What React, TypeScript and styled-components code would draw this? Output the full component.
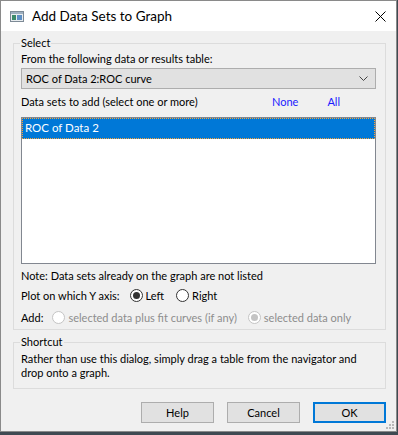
import React from 'react';
import styled, { createGlobalStyle } from 'styled-components';

const Global = createGlobalStyle`
  html, body { margin: 0; padding: 0; }
  body {
    background: #3f4a52;
    font-family: Lato, "Noto Sans", sans-serif;
    font-size: 11px;
    color: #000;
  }
`;

const Window = styled.div`
  position: relative;
  width: 397px;
  height: 432px;
  box-sizing: border-box;
  border: 1px solid #8a8a8a;
  background: #f0f0f0;
  display: flex;
  flex-direction: column;
`;

const TitleBar = styled.div`
  height: 30px;
  flex: none;
  background: #fff;
  display: flex;
  align-items: center;
  padding-left: 9px;
  padding-right: 9px;
`;

const TitleText = styled.div`
  flex: 1;
  margin-left: 8px;
  font-size: 13.5px;
  color: #000;
`;

const Body = styled.div`
  display: flex;
  flex-direction: column;
  padding: 4px 10px 0 12px;
`;

const Group = styled.fieldset<{ $gap?: number; $bottom?: number }>`
  margin: ${p => p.$gap ?? 0}px 0 0 0;
  padding: 0 9px ${p => p.$bottom ?? 2}px 7px;
  border: 1px solid #dcdcdc;
  min-width: 0;
  display: flex;
  flex-direction: column;
`;

const Legend = styled.legend`
  padding: 0 1px;
  margin-left: -1px;
  line-height: 16px;
`;

const Label = styled.div<{ $mt?: number }>`
  line-height: 16px;
  margin-top: ${p => p.$mt ?? 0}px;
  white-space: nowrap;
`;

const Combo = styled.div`
  margin-top: 1px;
  height: 21px;
  box-sizing: border-box;
  border: 1px solid #adadad;
  background: #e1e1e1;
  display: flex;
  align-items: center;
  padding: 0 7px 0 4px;
  justify-content: space-between;
`;

const ListHeader = styled.div`
  margin-top: 5px;
  display: flex;
  line-height: 16px;
  padding-right: 36px;
`;

const Link = styled.span<{ $ml?: number }>`
  color: #1a1aff;
  margin-left: ${p => (p.$ml === undefined ? 'auto' : `${p.$ml}px`)};
`;

const ListBox = styled.div`
  margin-top: 7px;
  height: 147px;
  box-sizing: border-box;
  border: 1px solid #828790;
  background: #fff;
  padding: 0;
`;

const ListItem = styled.div<{ $selected?: boolean }>`
  height: 21px;
  box-sizing: border-box;
  line-height: 20px;
  padding-left: 3px;
  font-size: 11.5px;
  background: ${p => (p.$selected ? '#0078d7' : 'transparent')};
  color: ${p => (p.$selected ? '#fff' : '#000')};
  outline: ${p => (p.$selected ? '1px dotted #f7a33a' : 'none')};
  outline-offset: -1px;
`;

const Row = styled.div<{ $mt?: number }>`
  display: flex;
  align-items: center;
  height: 20px;
  margin-top: ${p => p.$mt ?? 0}px;
  white-space: nowrap;
`;

const RadioLabel = styled.label<{ $ml: number; $disabled?: boolean }>`
  display: flex;
  align-items: center;
  margin-left: ${p => p.$ml}px;
  color: ${p => (p.$disabled ? '#8d8d8d' : '#000')};
`;

const RadioCircle = styled.span<{ $checked?: boolean; $disabled?: boolean }>`
  width: 13px;
  height: 13px;
  box-sizing: border-box;
  border-radius: 50%;
  border: 1px solid ${p => (p.$disabled ? '#c4c4c4' : '#333')};
  background: #fff;
  display: flex;
  align-items: center;
  justify-content: center;
  margin-right: 3px;
  &::after {
    content: '';
    display: ${p => (p.$checked ? 'block' : 'none')};
    width: 7px;
    height: 7px;
    border-radius: 50%;
    background: ${p => (p.$disabled ? '#c4c4c4' : '#333')};
  }
`;

const ShortcutText = styled.div`
  line-height: 14px;
  margin-top: 2px;
`;

const ButtonRow = styled.div`
  display: flex;
  justify-content: flex-end;
  gap: 13px;
  margin-top: 13px;
`;

const Button = styled.div<{ $default?: boolean }>`
  width: 73px;
  height: 21px;
  box-sizing: border-box;
  border: ${p => (p.$default ? '2px solid #0078d7' : '1px solid #adadad')};
  background: #e1e1e1;
  display: flex;
  align-items: center;
  justify-content: center;
`;

const Grip = styled.svg`
  position: absolute;
  right: 1px;
  bottom: 1px;
`;

const Radio = ({ label, checked, disabled, ml }: { label: string; checked?: boolean; disabled?: boolean; ml: number }) => (
  <RadioLabel $ml={ml} $disabled={disabled}>
    <RadioCircle $checked={checked} $disabled={disabled} />
    {label}
  </RadioLabel>
);

export default function App() {
  return (
    <>
      <Global />
      <Window>
        <TitleBar>
          <svg width="14" height="11" viewBox="0 0 14 11">
            <rect x="0.5" y="0.5" width="13" height="10" fill="#e8ecef" stroke="#7d8a96" />
            <rect x="1" y="1" width="12" height="2" fill="#9fb0c0" />
            <rect x="2" y="4" width="4" height="5" fill="#3c8a6a" />
            <rect x="7" y="4" width="5" height="5" fill="#5d8fc4" />
          </svg>
          <TitleText>Add Data Sets to Graph</TitleText>
          <svg width="11" height="11" viewBox="0 0 11 11" style={{ marginRight: 1 }}>
            <path d="M0.5 0.5 L10.5 10.5 M10.5 0.5 L0.5 10.5" stroke="#000" strokeWidth="1" />
          </svg>
        </TitleBar>
        <Body>
          <Group>
            <Legend>Select</Legend>
            <Label>From the following data or results table:</Label>
            <Combo>
              <span>ROC of Data 2:ROC curve</span>
              <svg width="9" height="5" viewBox="0 0 9 5">
                <path d="M0.5 0.5 L4.5 4.5 L8.5 0.5" fill="none" stroke="#444" strokeWidth="1" />
              </svg>
            </Combo>
            <ListHeader>
              <span>Data sets to add (select one or more)</span>
              <Link>None</Link>
              <Link $ml={29}>All</Link>
            </ListHeader>
            <ListBox>
              <ListItem $selected>ROC of Data 2</ListItem>
            </ListBox>
            <Label $mt={4}>Note: Data sets already on the graph are not listed</Label>
            <Row $mt={1}>
              <span>Plot on which Y axis:</span>
              <Radio label="Left" checked ml={10} />
              <Radio label="Right" ml={12} />
            </Row>
            <Row $mt={2}>
              <span>Add:</span>
              <Radio label="selected data plus fit curves (if any)" disabled ml={9} />
              <Radio label="selected data only" checked disabled ml={11} />
            </Row>
          </Group>
          <Group $gap={4} $bottom={8}>
            <Legend>Shortcut</Legend>
            <ShortcutText>
              Rather than use this dialog, simply drag a table from the navigator and
              <br />
              drop onto a graph.
            </ShortcutText>
          </Group>
          <ButtonRow>
            <Button>Help</Button>
            <Button>Cancel</Button>
            <Button $default>OK</Button>
          </ButtonRow>
        </Body>
        <Grip width="9" height="9" viewBox="0 0 9 9">
          <rect x="6" y="0" width="2" height="2" fill="#b8b8b8" />
          <rect x="3" y="3" width="2" height="2" fill="#b8b8b8" />
          <rect x="6" y="3" width="2" height="2" fill="#b8b8b8" />
          <rect x="0" y="6" width="2" height="2" fill="#b8b8b8" />
          <rect x="3" y="6" width="2" height="2" fill="#b8b8b8" />
          <rect x="6" y="6" width="2" height="2" fill="#b8b8b8" />
        </Grip>
      </Window>
    </>
  );
}
